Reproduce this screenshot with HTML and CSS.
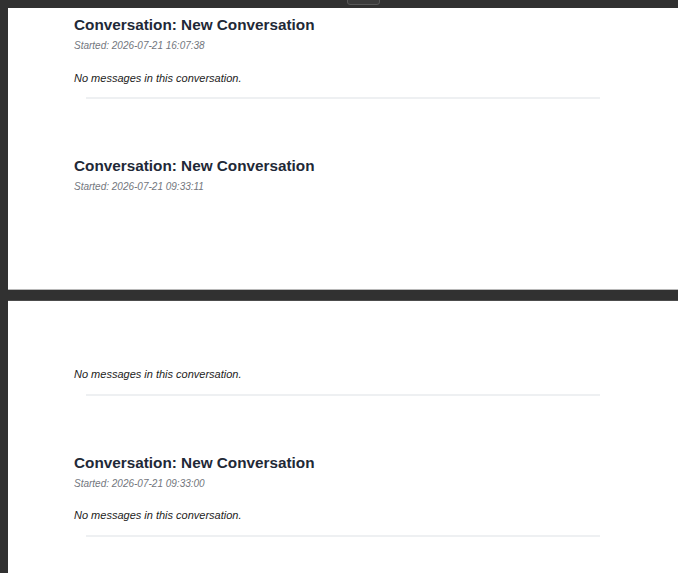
FILE: index.html
```html
<!DOCTYPE html>
<html lang="en">
<head>
    <meta charset="UTF-8">
    <meta name="viewport" content="width=device-width, initial-scale=1.0">
    <title>Conversation Export</title>
    <link rel="stylesheet" href="styles.css">
</head>
<body>
    <div class="toolbar">
        <div class="toolbar-tab"></div>
    </div>

    <div class="viewer">
        <div class="page page-first">
            <div class="entry">
                <h2 class="title">Conversation: New Conversation</h2>
                <p class="started">Started: 2026-07-21 16:07:38</p>
                <p class="empty">No messages in this conversation.</p>
                <hr class="divider">
            </div>
            <div class="entry">
                <h2 class="title">Conversation: New Conversation</h2>
                <p class="started">Started: 2026-07-21 09:33:11</p>
            </div>
        </div>

        <div class="page page-next">
            <div class="entry entry-cont">
                <p class="empty">No messages in this conversation.</p>
                <hr class="divider">
            </div>
            <div class="entry">
                <h2 class="title">Conversation: New Conversation</h2>
                <p class="started">Started: 2026-07-21 09:33:00</p>
                <p class="empty">No messages in this conversation.</p>
                <hr class="divider">
            </div>
        </div>
    </div>
</body>
</html>
```

FILE: styles.css
```css
html,
body {
    margin: 0;
    padding: 0;
    height: 100%;
    overflow: hidden;
}

body {
    font-family: "Liberation Sans", Arial, sans-serif;
    background-color: #313131;
    position: relative;
}

.toolbar {
    height: 8px;
    background-color: #313131;
}

/* kleiner Reiter der Werkzeugleiste */
.toolbar-tab {
    position: absolute;
    top: -2px;
    left: 347px;
    width: 31px;
    height: 5px;
    background-color: #3b3b3b;
    border: 1px solid #585858;
    border-radius: 0 0 3px 3px;
}

.viewer {
    padding-left: 8px;
}

.page {
    background-color: #ffffff;
    padding: 0 66px;
    box-sizing: border-box;
}

.page-first {
    height: 282px;
    padding-top: 8px;
    border-bottom: 1px solid #b8b8b8;
    overflow: hidden;
}

.page-next {
    margin-top: 10px;
    padding-top: 66px;
    height: 300px;
    border-top: 1px solid #4c4c4c;
}

.entry {
    padding-bottom: 58px;
}

.title {
    margin: 0;
    font-size: 15.3px;
    line-height: 18px;
    font-weight: bold;
    color: #1f2937;
}

.started {
    margin: 6px 0 0;
    font-size: 10px;
    line-height: 12px;
    font-style: italic;
    color: #72767d;
}

.empty {
    margin: 18.5px 0 0;
    font-size: 11px;
    line-height: 14px;
    font-style: italic;
    color: #222222;
}

.entry-cont .empty {
    margin-top: 0;
}

.divider {
    margin: 12.5px 12px 0;
    border: none;
    height: 2px;
    background-color: #eef0f2;
}
```
